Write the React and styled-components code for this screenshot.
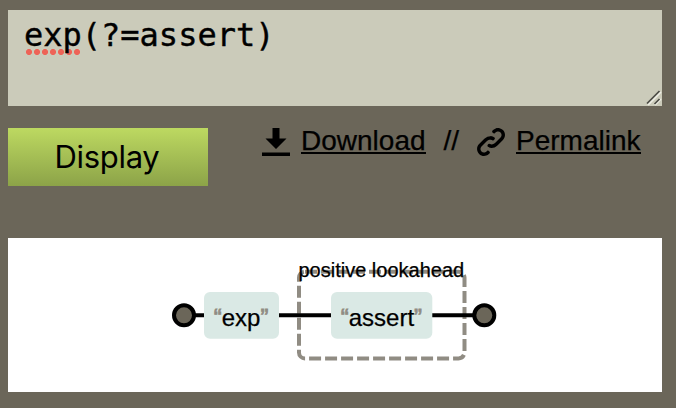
import React from "react";
import styled, { createGlobalStyle } from "styled-components";

const GlobalStyle = createGlobalStyle`
  * { box-sizing: border-box; }
  body {
    margin: 0;
    background: #6b6659;
    color: #000;
    font-family: "Liberation Sans", Arial, sans-serif;
  }
`;

const Page = styled.main`
  height: 408px;
  padding: 10px 14px 16px 8px;
  display: flex;
  flex-direction: column;
`;

const Editor = styled.div`
  position: relative;
  flex: none;
  height: 96px;
  padding: 7px 16px;
  background: #cbcbba;
  font: 32px/37px "DejaVu Sans Mono", monospace;
  -webkit-text-stroke: 0.4px #000;
  white-space: pre;
`;

const Misspelled = styled.span`
  padding-bottom: 1px;
  background: radial-gradient(circle at 4px 3px, #ee6357 2.6px, transparent 3.5px) 1px 100% / 8px 6px repeat-x;
`;

const Grip = styled.svg`
  position: absolute;
  right: 0;
  bottom: 0;
`;

const Toolbar = styled.div`
  flex: none;
  display: flex;
  margin-top: 22px;
  height: 58px;
`;

const DisplayButton = styled.button`
  width: 200px;
  height: 58px;
  padding: 0 2px 0 0;
  border: 0;
  background: linear-gradient(#bdd961, #8ca348);
  color: #000;
  font: 31px/58px Inter, sans-serif;
  letter-spacing: -0.3px;
`;

const Links = styled.nav`
  display: flex;
  align-items: flex-start;
  margin-left: 54px;
  font-size: 28px;
  line-height: 26px;
  -webkit-text-stroke: 0.25px #000;
`;

const Link = styled.a`
  display: flex;
  gap: 11px;
  color: inherit;
`;

const LinkText = styled.span`
  height: 26px;
  border-bottom: 2px solid #000;
`;

const Separator = styled.span`
  width: 15.5px;
  margin: 0 18px;
`;

const Results = styled.section`
  flex: none;
  height: 154px;
  margin-top: 52px;
  background: #fff;
`;

const Diagram = styled.svg`
  display: block;
  font-family: "Liberation Sans", Arial, sans-serif;
`;

const Track = styled.path`
  fill: none;
  stroke: #000;
  stroke-width: 4px;
`;

const Terminal = styled.circle`
  fill: #6b6659;
  stroke: #000;
  stroke-width: 4px;
`;

const LiteralBox = styled.rect`
  fill: #dae9e5;
`;

const LiteralText = styled.text`
  font-size: 24px;
  stroke: #000;
  stroke-width: 0.25px;
`;

const Quote = styled.tspan`
  fill: #908c83;
  stroke: #908c83;
  stroke-width: 0.8px;
`;

const Group = styled.rect`
  fill: none;
  stroke: #908c83;
  stroke-width: 4px;
  stroke-dasharray: 12 4;
`;

const GroupLabel = styled.text`
  font-size: 20px;
  stroke: #000;
  stroke-width: 0.25px;
`;

const DOWNLOAD = "M3 0v3h-2l3 3 3-3h-2v-3h-2zm-3 7v1h8v-1h-8z";
const CHAIN =
  "M5.88.03c-.18.01-.36.03-.53.09-.27.1-.53.25-.75.47a.5.5 0 1 0 .69.69c.11-.11.24-.17.38-.22.35-.12.78-.07 1.06.22.39.39.39 1.04 0 1.44l-1.5 1.5c-.44.44-.8.48-1.06.47-.26-.01-.41-.13-.41-.13a.5.5 0 1 0-.5.88s.34.22.84.25c.5.03 1.2-.16 1.81-.78l1.5-1.5c.78-.78.78-2.04 0-2.81-.28-.28-.61-.45-.97-.53-.18-.04-.38-.04-.56-.03zm-2 2.31c-.5-.02-1.19.15-1.78.75l-1.5 1.5c-.78.78-.78 2.04 0 2.81.56.56 1.36.72 2.06.47.27-.1.53-.25.75-.47a.5.5 0 1 0-.69-.69c-.11.11-.24.17-.38.22-.35.12-.78.07-1.06-.22-.39-.39-.39-1.04 0-1.44l1.5-1.5c.4-.4.75-.45 1.03-.44.28.01.47.09.47.09a.5.5 0 1 0 .44-.88s-.34-.2-.84-.22z";

function IconLink({ icon, children }) {
  return (
    <Link>
      <svg width="28" height="28" viewBox="0 0 8 8">
        <path d={icon} />
      </svg>
      <LinkText>{children}</LinkText>
    </Link>
  );
}

function Literal({ x, width, children }) {
  return (
    <g>
      <LiteralBox x={x} y="54" width={width} height="46.7" rx="6" />
      <LiteralText x={x + 9.7} y="88">
        <Quote>“</Quote>
        {children}
        <Quote>”</Quote>
      </LiteralText>
    </g>
  );
}

export default function App() {
  return (
    <Page>
      <GlobalStyle />
      <Editor>
        <Misspelled>exp</Misspelled>(?=assert)
        <Grip width="18" height="18" viewBox="0 0 18 18" fill="none" strokeWidth="1.7">
          <path d="M4 17 17 4M11 17l6-6" stroke="#eeeee5" />
          <path d="M3 15.5 15.5 3M10.5 16l5-5" stroke="#4b4b45" />
        </Grip>
      </Editor>
      <Toolbar>
        <DisplayButton>Display</DisplayButton>
        <Links>
          <IconLink icon={DOWNLOAD}>Download</IconLink>
          <Separator>//</Separator>
          <IconLink icon={CHAIN}>Permalink</IconLink>
        </Links>
      </Toolbar>
      <Results>
        <Diagram width="654" height="154" viewBox="0 0 654 154">
          <Group x="291" y="33.7" width="165.5" height="86.7" rx="6" />
          <Track d="M176 77.3H476.3" />
          <Terminal cx="176" cy="77.3" r="10" />
          <Terminal cx="476.3" cy="77.3" r="10" />
          <Literal x={196} width={75}>exp</Literal>
          <Literal x={323} width={101.3}>assert</Literal>
          <GroupLabel x="290.5" y="39">positive lookahead</GroupLabel>
        </Diagram>
      </Results>
    </Page>
  );
}
